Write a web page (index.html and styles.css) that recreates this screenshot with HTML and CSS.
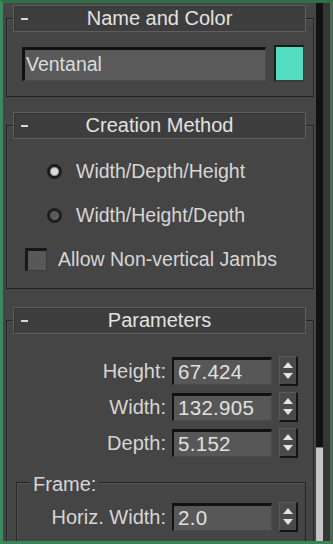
FILE: index.html
```html
<!DOCTYPE html>
<html>
<head>
<meta charset="utf-8">
<link rel="stylesheet" href="styles.css">
</head>
<body>
<div class="window">
  <div class="panels">
    <section class="rollout r1">
      <div class="rhead"><span class="dash"></span><span class="title">Name and Color</span><span></span></div>
      <div class="body1">
        <div class="namefield">Ventanal</div>
        <div class="swatch"></div>
      </div>
    </section>

    <section class="rollout r2">
      <div class="rhead"><span class="dash"></span><span class="title">Creation Method</span><span></span></div>
      <div class="body2">
        <div class="opt"><span class="radio on"></span><span>Width/Depth/Height</span></div>
        <div class="opt opt2"><span class="radio"></span><span>Width/Height/Depth</span></div>
        <div class="check-row"><span class="check"></span><span>Allow Non-vertical Jambs</span></div>
      </div>
    </section>

    <section class="rollout r3">
      <div class="rhead"><span class="dash"></span><span class="title">Parameters</span><span></span></div>
      <div class="body3">
        <div class="prow"><span class="plabel">Height:</span><span class="field">67.424</span><span class="spin"><i class="up"></i><i class="down"></i></span></div>
        <div class="prow"><span class="plabel">Width:</span><span class="field">132.905</span><span class="spin"><i class="up"></i><i class="down"></i></span></div>
        <div class="prow"><span class="plabel">Depth:</span><span class="field">5.152</span><span class="spin"><i class="up"></i><i class="down"></i></span></div>
        <div class="group">
          <div class="gtitle">Frame:</div>
          <div class="prow grow"><span class="plabel">Horiz. Width:</span><span class="field">2.0</span><span class="spin"><i class="up"></i><i class="down"></i></span></div>
        </div>
      </div>
    </section>
  </div>
  <div class="scroll"><div class="thumb"></div></div>
  <div class="gutter"></div>
</div>
</body>
</html>
```
FILE: styles.css
```css
* { box-sizing: border-box; }
html, body { margin: 0; padding: 0; background: #454545; }
body {
  font-family: "Liberation Sans", Arial, sans-serif;
  font-size: 19.5px;
  color: #d6d6d6;
}
.window {
  width: 333px;
  height: 544px;
  display: flex;
  border-top: 3px solid #2f6f48;
  border-left: 3px solid #3a8a5b;
  border-bottom: 3px solid #3a8458;
  border-right: 3px solid #4d6a52;
  background: #454545;
  overflow: hidden;
}
.panels {
  width: 313px;
  padding-left: 3px;
  padding-right: 2px;
  flex: none;
}
.scroll {
  width: 7px;
  flex: none;
  background: #111;
  display: flex;
  flex-direction: column;
}
.thumb {
  margin-top: auto;
  height: 94px;
  background: #c6c6c6;
  border-top: 1px solid #777;
}
.gutter {
  width: 7px;
  flex: none;
  background: #363636;
}
.rollout {
  border: 1px solid #232323;
  border-right-color: #2a2a2a;
  box-shadow: inset 1px 1px 0 #4f4f4f;
}
.r1 { margin-top: 15px; }
.r2 { margin-top: 28px; }
.r3 { margin-top: 31px; border-bottom: none; }
.rhead {
  margin: -14px 7px 0 6px;
  height: 27px;
  border: 1px solid #5e5e5e;
  background: #3e3e3e;
  box-shadow: inset 1px 1px 0 #353535;
  display: grid;
  grid-template-columns: 1fr auto 1fr;
  align-items: center;
  font-size: 20px;
  color: #e2e2e2;
}
.dash {
  width: 7px;
  height: 2px;
  background: #d8d8d8;
  margin-left: 7px;
}
.title { line-height: 25px; }

.body1 {
  display: flex;
  align-items: center;
  padding: 13px 9px 14px 15px;
}
.namefield {
  width: 244px;
  height: 34px;
  background: #5a5a5a;
  border-top: 3px solid #111;
  border-left: 3px solid #111;
  border-bottom: 1px solid #4c4c4c;
  border-right: 1px solid #4c4c4c;
  padding-left: 1px;
  line-height: 29px;
  color: #dcdcdc;
}
.swatch {
  width: 30px;
  height: 37px;
  margin-left: 8px;
  background: #52dcc0;
  border-top: 2px solid #1a1a1a;
  border-left: 2px solid #1a1a1a;
  border-right: 1px solid #3a3a3a;
  border-bottom: 2px solid #3a3a3a;
}

.body2 {
  padding: 20px 0 17px 0;
}
.opt {
  display: flex;
  align-items: center;
  height: 24px;
  padding-left: 40px;
  gap: 14px;
}
.opt2 { margin-top: 20px; }
.radio {
  width: 15px;
  height: 15px;
  border-radius: 50%;
  background: #5a5a5a;
  border: 3px solid #1e1e1e;
  box-shadow: inset -1px -1px 0 #6a6a6a;
  flex: none;
}
.radio.on {
  background: #dadada;
  border-color: #1c1c1c;
  box-shadow: inset 0 0 0 1px #9a9a9a;
}
.check-row {
  display: flex;
  align-items: center;
  height: 24px;
  margin-top: 20px;
  padding-left: 18px;
  gap: 11px;
}
.check {
  width: 22px;
  height: 23px;
  background: #585858;
  border-top: 3px solid #181818;
  border-left: 3px solid #181818;
  border-right: 1px solid #3c3c3c;
  border-bottom: 1px solid #3c3c3c;
  flex: none;
}

.body3 {
  padding: 22px 0 0 0;
}
.prow {
  display: flex;
  align-items: center;
  justify-content: flex-end;
  height: 30px;
  padding-right: 15px;
  margin-bottom: 6px;
}
.plabel {
  margin-right: 6px;
  font-size: 20px;
}
.field {
  width: 100px;
  height: 28px;
  background: #575757;
  border-top: 3px solid #111;
  border-left: 2px solid #111;
  border-right: 1px solid #4a4a4a;
  border-bottom: 1px solid #4a4a4a;
  padding-left: 4px;
  line-height: 24px;
  font-size: 20.5px;
  color: #e0e0e0;
  letter-spacing: 0.3px;
}
.spin {
  width: 19px;
  height: 30px;
  margin-left: 7px;
  background: #4a4a4a;
  border-top: 1px solid #5a5a5a;
  border-left: 1px solid #5a5a5a;
  border-right: 2px solid #141414;
  border-bottom: 2px solid #141414;
  display: flex;
  flex-direction: column;
  align-items: center;
  justify-content: space-evenly;
}
.spin i {
  display: block;
  width: 0;
  height: 0;
  border-left: 5.5px solid transparent;
  border-right: 5.5px solid transparent;
}
.spin .up { border-bottom: 6px solid #e4e4e4; }
.spin .down { border-top: 6px solid #e4e4e4; }

.group {
  margin: 24px 7px 0 9px;
  border: 1px solid #252525;
  border-bottom: none;
  box-shadow: inset 1px 1px 0 #555;
  height: 80px;
}
.gtitle {
  width: fit-content;
  margin: -10px 0 0 13px;
  padding: 0 3px;
  background: #454545;
  line-height: 22px;
  font-size: 20px;
}
.grow {
  margin-top: 7px;
  padding-right: 7px;
}
```
